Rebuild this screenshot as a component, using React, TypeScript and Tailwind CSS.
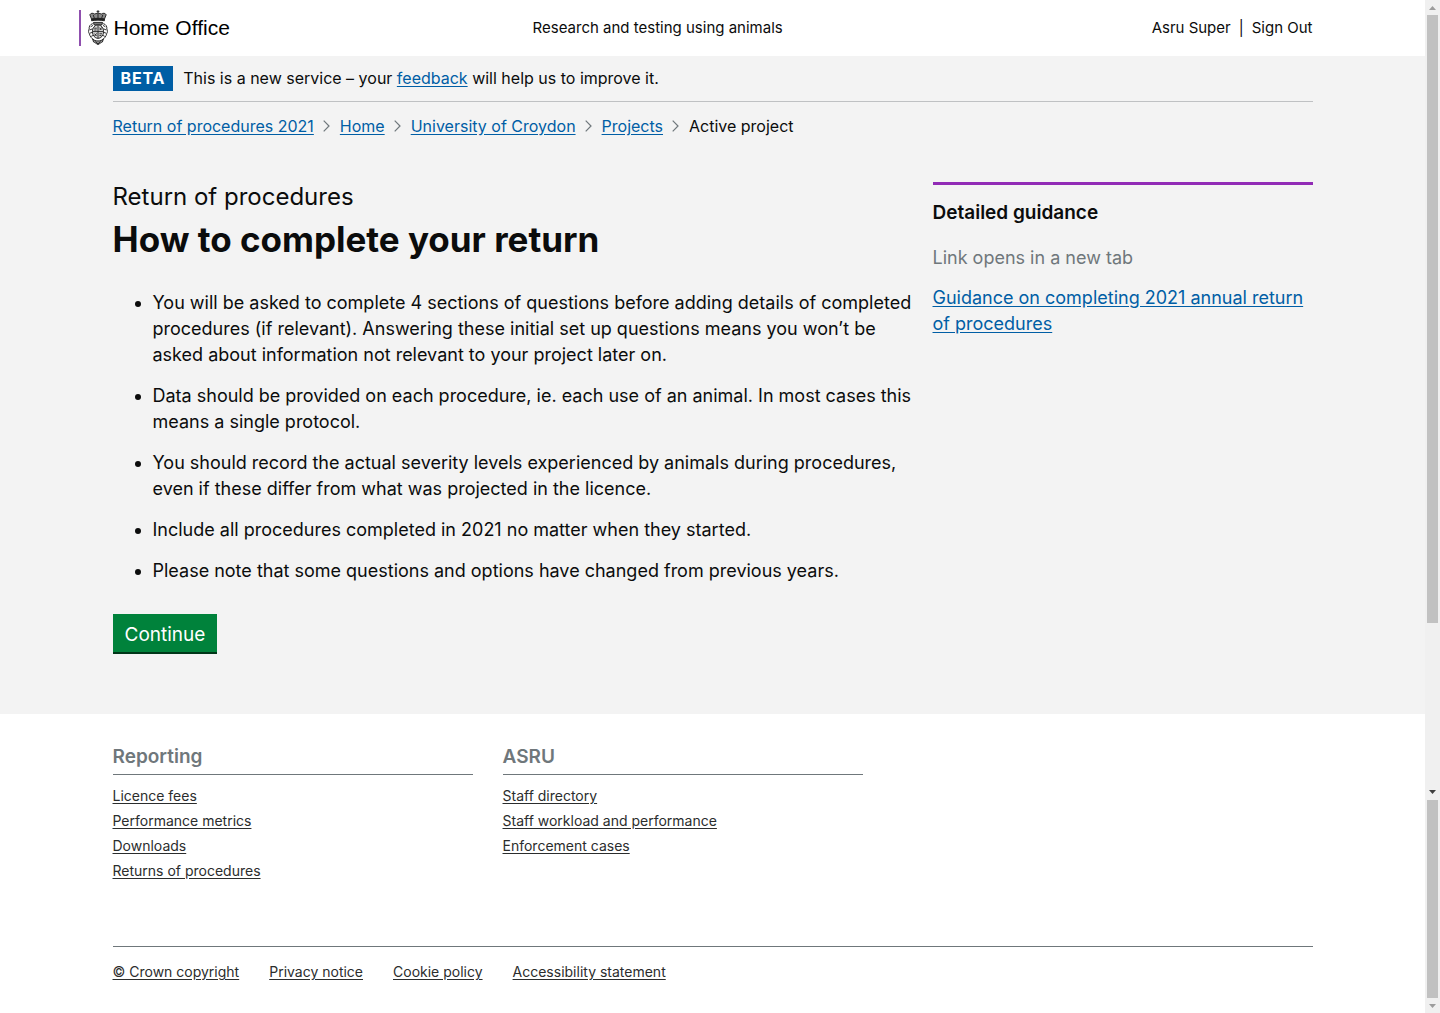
import React from 'react';

const link = 'text-[#005ea5] underline underline-offset-2';

function Chevron() {
  return (
    <svg width="7" height="12" viewBox="0 0 7 12" fill="none" stroke="#6f777b" strokeWidth="1.2" className="shrink-0" aria-hidden="true">
      <path d="M.7 .7 6 6 .7 11.3" />
    </svg>
  );
}

function Crest() {
  return (
    <svg width="20" height="36" viewBox="0 0 20 36" fill="none" stroke="#1c1c1c" strokeWidth="0.9" aria-hidden="true">
      <path d="M10 .2v3.2M8.600 1.400h2.800" />
      <path d="M3.600 9.200 1.800 4.800c1-1.800 3-2 4.800-.8L10 3l3.400 1c1.800-1.200 3.800-1 4.800.8l-1.800 4.400z" fill="#8a8a8a" />
      <path d="M5.200 4.800l1.200 3.600M10 3.600v4.800M14.800 4.800l-1.200 3.600" />
      <path d="M3.600 9c4-1 8.800-1 12.800 0v1.800c-4-.9-8.800-.9-12.800 0z" fill="#222" />
      <path d="M5.400 12.400h9.200l-.8 2.600H6.200z" fill="#777" />
      <path d="M4.800 13.600c-2.800.6-4 3-3.600 5.400-1 1.400-.8 3.600.2 4.800.4 2.400 2.400 5 4.600 6M15.200 13.600c2.800.6 4 3 3.600 5.400 1 1.400.8 3.600-.2 4.800-.4 2.400-2.400 5-4.600 6" />
      <path d="M2.600 16.800l2.400-1.400M1.600 20l3-1.200M1.800 23.200l3-1M3.200 26.400l2.600-1.400M17.400 16.800 15 15.400M18.400 20l-3-1.200M18.200 23.200l-3-1M16.800 26.400l-2.600-1.400" />
      <ellipse cx="10" cy="21.600" rx="5.600" ry="6.800" fill="#d6d6d6" />
      <path d="M10 15v13.200M4.500 21.600h11" />
      <path d="M6.200 18.200h2.600M6.200 20h2.400M11.400 17.600l2 2.400M13.800 17.400l-2.200 2.800M6.400 23.600l2.200 2.400M8.600 23.400l-2 2.600M11.400 23.800h2.600M11.400 25.600h2" />
      <path d="M4.600 29c2.400 2.600 8.400 2.600 10.800 0l-1 3c-1.400.6-2 1.200-4.400 2.600-2.400-1.400-3-2-4.400-2.600z" fill="#999" />
      <path d="M7.600 31.400 10 34l2.400-2.600" />
    </svg>
  );
}

function FooterColumn({ title, items }: { title: string; items: string[] }) {
  return (
    <section className="w-[360px]">
      <h2 className="border-b border-[#6f777b] pb-[2px] text-[19px] leading-[30px] font-semibold text-[#6f777b]">{title}</h2>
      <ul className="mt-2 text-sm leading-[25px]">
        {items.map((t) => (
          <li key={t}>
            <a href="#" className="underline underline-offset-2">{t}</a>
          </li>
        ))}
      </ul>
    </section>
  );
}

function ScrollTrack() {
  return (
    <div className="flex w-[15px] shrink-0 flex-col items-center bg-[#f0f0f0]" aria-hidden="true">
      <div className="flex h-[15px] items-center">
        <svg width="7" height="4" viewBox="0 0 7 4" fill="#9c9c9c"><path d="M0 4 3.500 0 7 4z" /></svg>
      </div>
      <div className="w-[11px] flex-[608] bg-[#c1c1c1]" />
      <div className="flex-[167]" />
      <div className="flex h-[10px] items-start">
        <svg width="7" height="4" viewBox="0 0 7 4" fill="#404040"><path d="M0 0 3.500 4 7 0z" /></svg>
      </div>
      <div className="w-[11px] flex-[198] bg-[#c1c1c1]" />
      <div className="flex h-[15px] items-center">
        <svg width="7" height="4" viewBox="0 0 7 4" fill="#9c9c9c"><path d="M0 0 3.500 4 7 0z" /></svg>
      </div>
    </div>
  );
}

const crumbs = ['Return of procedures 2021', 'Home', 'University of Croydon', 'Projects'];

const notes = [
  'You will be asked to complete 4 sections of questions before adding details of completed procedures (if relevant). Answering these initial set up questions means you won’t be asked about information not relevant to your project later on.',
  'Data should be provided on each procedure, ie. each use of an animal. In most cases this means a single protocol.',
  'You should record the actual severity levels experienced by animals during procedures, even if these differ from what was projected in the licence.',
  'Include all procedures completed in 2021 no matter when they started.',
  'Please note that some questions and options have changed from previous years.',
];

const legal = ['© Crown copyright', 'Privacy notice', 'Cookie policy', 'Accessibility statement'];

export default function App() {
  return (
    <div className="flex min-h-screen bg-white font-[Inter,sans-serif] text-[#0b0c0c]">
      <div className="flex min-w-0 flex-1 flex-col">
        <header className="mx-auto flex h-14 w-full max-w-[1268px] items-center pr-[34px] text-[15px] leading-6">
          <div className="flex-6">
            <a href="#" className="flex h-9 w-fit items-center border-l-2 border-[#8f4fae] pl-[7px] text-black">
              <Crest />
              <span className="ml-[6px] font-['Liberation_Sans',Arial,sans-serif] text-[21px] leading-9">Home Office</span>
            </a>
          </div>
          <a href="#">Research and testing using animals</a>
          <nav className="flex flex-7 justify-end gap-2">
            <a href="#">Asru Super</a>
            <span>|</span>
            <a href="#">Sign Out</a>
          </nav>
        </header>

        <main className="bg-[#f3f3f3] pb-[60px]">
          <div className="mx-auto max-w-[1200px]">
            <div className="flex items-center border-b border-[#bfc1c3] py-[10px]">
              <strong className="bg-[#005ea5] px-2 text-base leading-[25px] font-bold tracking-wider text-white">BETA</strong>
              <p className="ml-[10px] text-base leading-[25px]">
                This is a new service – your <a className={link} href="#">feedback</a> will help us to improve it.
              </p>
            </div>

            <nav aria-label="Breadcrumb" className="pt-3">
              <ol className="flex flex-wrap items-center gap-[10px] text-base leading-6">
                {crumbs.map((c) => (
                  <li key={c} className="flex items-center gap-[9px]">
                    <a href="#" className={link}>{c}</a>
                    <Chevron />
                  </li>
                ))}
                <li>Active project</li>
              </ol>
            </nav>

            <div className="mt-11 flex items-start justify-between gap-4">
              <div className="max-w-[803px] flex-1">
                <h1>
                  <span className="block text-2xl leading-[30px] font-normal">Return of procedures</span>
                  <span className="block text-[35px] leading-[54px] font-bold">How to complete your return</span>
                </h1>
                <ul className="mt-6 list-disc space-y-[15px] pl-10 text-lg leading-[26px]">
                  {notes.map((n) => (
                    <li key={n}>{n}</li>
                  ))}
                </ul>
                <button type="button" className="mt-[30px] h-10 border-b-2 border-[#003618] bg-[#00823b] px-3 pt-1 text-[19px] leading-[34px] text-white">
                  Continue
                </button>
              </div>

              <aside className="w-[380px] shrink-0 border-t-3 border-[#912bb5]">
                <h2 className="mt-[15px] text-[19px] leading-[26px] font-semibold">Detailed guidance</h2>
                <p className="mt-[19px] text-lg leading-[25px] text-[#6f777b]">Link opens in a new tab</p>
                <p className="mt-[15px] text-lg leading-[26px]">
                  <a href="#" className={link}>Guidance on completing 2021 annual return of procedures</a>
                </p>
              </aside>
            </div>
          </div>
        </main>

        <footer className="mx-auto w-full max-w-[1200px] pt-7 pb-7 text-[#2b2d2d]">
          <div className="flex gap-[30px]">
            <FooterColumn title="Reporting" items={['Licence fees', 'Performance metrics', 'Downloads', 'Returns of procedures']} />
            <FooterColumn title="ASRU" items={['Staff directory', 'Staff workload and performance', 'Enforcement cases']} />
          </div>
          <ul className="mt-[63px] flex flex-wrap gap-x-[30px] border-t border-[#6f777b] pt-3 text-sm leading-[25px]">
            {legal.map((t) => (
              <li key={t}>
                <a href="#" className="underline underline-offset-2">{t}</a>
              </li>
            ))}
          </ul>
        </footer>
      </div>
      <ScrollTrack />
    </div>
  );
}
